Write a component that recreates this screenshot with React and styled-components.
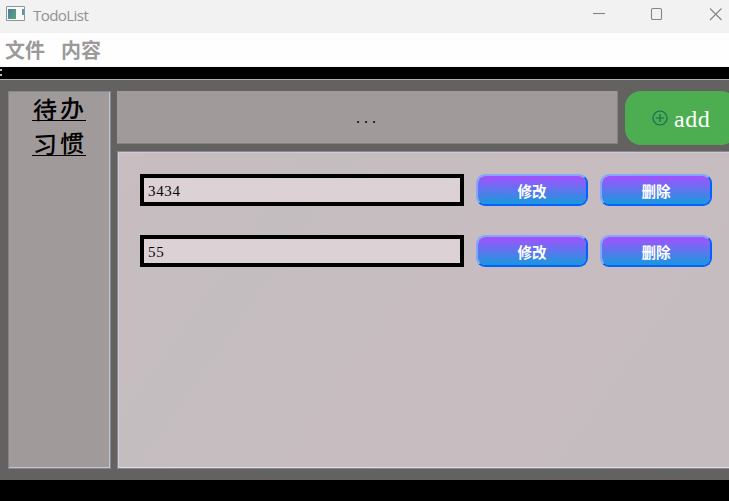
import React from "react";
import styled, { createGlobalStyle } from "styled-components";

const GlobalStyle = createGlobalStyle`
  * { box-sizing: border-box; }
  body { margin: 0; background: #000; overflow: hidden; }
  button, input { font: inherit; margin: 0; }
`;
const Window = styled.div`
  display: flex;
  flex-direction: column;
  width: 729px;
  height: 501px;
  overflow: hidden;
  background: #000;
`;
const TitleBar = styled.header`
  display: flex;
  align-items: flex-start;
  height: 33px;
  flex: none;
  padding: 6px 6px 0 6px;
  background: #f2f2f2;
  color: #929292;
`;
const Title = styled.span`
  margin-left: 7px;
  font: 15.2px/18px "Open Sans", "Noto Sans", sans-serif;
  letter-spacing: -0.65px;
`;
const WindowControls = styled.div`
  display: flex;
  gap: 43px;
  margin-left: auto;
  padding-top: 1px;
`;
const MenuBar = styled.nav`
  display: flex;
  gap: 16px;
  height: 34px;
  flex: none;
  padding: 2px 5px 0;
  background: #fefefe;
  border-bottom: 1px solid #f5f6f6;
  color: #9b9999;
  font: 700 20px/30px "Noto Sans CJK SC", sans-serif;
`;
const ToolStrip = styled.div`
  display: flex;
  flex-direction: column;
  gap: 3px;
  height: 12px;
  flex: none;
  padding-top: 2px;
`;
const Grip = styled.i`
  width: 2px;
  height: 2px;
  background: #bcbcbc;
`;
const Workspace = styled.main`
  display: grid;
  grid-template-columns: 103px 620px;
  gap: 6px;
  height: 401px;
  flex: none;
  padding: 11px 0 11px 8px;
  background: #636260;
  border-top: 1px solid #b1b1b1;
`;
const Sidebar = styled.aside`
  display: flex;
  flex-direction: column;
  gap: 8px;
  padding: 2px 0 0 23px;
  background: #a09a9b;
  border: 1px solid #808793;
  box-shadow: inset -1px -1px #c4c8ce;
`;
const Category = styled.a`
  width: 54px;
  height: 27px;
  padding-left: 1px;
  border-bottom: 1px solid #000;
  color: #000;
  font: 500 24px/27px "KaiTi", "STKaiti", "Noto Sans CJK SC", sans-serif;
  letter-spacing: 3px;
  white-space: nowrap;
`;
const CategoryText = styled.span`
  display: block;
  transform: skewY(-3deg);
`;
const Content = styled.section`
  display: flex;
  flex-direction: column;
  gap: 6px;
  min-width: 0;
`;
const Header = styled.div`
  display: flex;
  gap: 7px;
  height: 54px;
`;
const Summary = styled.div`
  width: 501px;
  height: 53px;
  padding: 17px 2px 0 0;
  background: #a09a9b;
  border: solid #858184;
  border-width: 0 1px 1px 0;
  color: #000;
  font: 13.333px/24px "Liberation Mono", monospace;
  text-align: center;
`;
const AddButton = styled.button`
  display: flex;
  align-items: center;
  gap: 6px;
  width: 112px;
  height: 54px;
  padding: 0 0 0 27px;
  border: 0;
  border-radius: 16px;
  background: #4cae50;
  color: #fff;
  font: 24px/30px "Liberation Serif", serif;
`;
const AddLabel = styled.span`
  padding-top: 2px;
  letter-spacing: .6px;
`;
const TaskPanel = styled.div`
  display: flex;
  flex-direction: column;
  gap: 29px;
  flex: 1;
  padding: 22px 0 0 22px;
  background: linear-gradient(125deg, #c8bdc1, #c4bdbf 25%, #c7bdc0 50%, #c5bcbf);
  border: 1px solid #858991;
  box-shadow: inset 1px 0 #d0ced4, inset 0 -1px #dee1e0, inset 0 1px #d2c9d4;
`;
const Task = styled.div`
  display: flex;
  gap: 12px;
  height: 32px;
`;
const TaskInput = styled.input`
  width: 324px;
  height: 32px;
  padding: 2px 4px 0;
  border: 4px solid #000;
  border-radius: 0;
  outline: 0;
  background: #dcd2d6;
  color: #080808;
  font: 15px/20px "Liberation Serif", serif;
  letter-spacing: .65px;
`;
const TaskButton = styled.button`
  width: 112px;
  height: 32px;
  padding: 2px 0 0;
  border: 2px solid;
  border-color: #84a7fb #0560ff #0560ff #84a7fb;
  border-radius: 9px;
  background: linear-gradient(#a451ff, #1899dc) padding-box;
  color: #fff;
  font: 700 14.5px/20px "Noto Sans CJK SC", sans-serif;
`;

const AppIcon = () => (
  <svg width="20" height="16" viewBox="0 0 20 16">
    <defs><linearGradient id="app" x2="1" y2="1"><stop stopColor="#4c78a2" /><stop offset="1" stopColor="#57aa78" /></linearGradient></defs>
    <path d="M.5.5h18v14H.5z" fill="#f8f8f8" stroke="#8d969e" />
    <path d="M2 3h8v10H2z" fill="url(#app)" />
    <path d="M16 3h2v6h-2z" fill="#5b9d99" />
  </svg>
);
const controls = ["M1 6.5h12", "M2.8 1.5h7.4q1.3 0 1.3 1.3v8.4q0 1.3-1.3 1.3H2.8q-1.3 0-1.3-1.3V2.8q0-1.3 1.3-1.3", "M2 1.5l11.5 11.5M13.5 1.5L2 13"];
const tasks = ["3434", "55"];

export default function App() {
  return (
    <>
      <GlobalStyle />
      <Window>
        <TitleBar>
          <AppIcon />
          <Title>TodoList</Title>
          <WindowControls>
            {controls.map((d) => <svg key={d} width="15" height="15" viewBox="0 0 15 15" fill="none" stroke="#858585" strokeWidth="1.1"><path d={d} /></svg>)}
          </WindowControls>
        </TitleBar>
        <MenuBar><span>文件</span><span>内容</span></MenuBar>
        <ToolStrip><Grip /><Grip /></ToolStrip>
        <Workspace>
          <Sidebar>
            <Category><CategoryText>待办</CategoryText></Category>
            <Category><CategoryText>习惯</CategoryText></Category>
          </Sidebar>
          <Content>
            <Header>
              <Summary>...</Summary>
              <AddButton>
                <svg width="16" height="16" viewBox="0 0 16 16" fill="none" stroke="#176957" strokeWidth="1.2"><circle cx="8" cy="8" r="7" /><path d="M8 4v8M4 8h8" /></svg>
                <AddLabel>add</AddLabel>
              </AddButton>
            </Header>
            <TaskPanel>
              {tasks.map((task) => (
                <Task key={task}>
                  <TaskInput defaultValue={task} />
                  <TaskButton>修改</TaskButton>
                  <TaskButton>删除</TaskButton>
                </Task>
              ))}
            </TaskPanel>
          </Content>
        </Workspace>
      </Window>
    </>
  );
}
